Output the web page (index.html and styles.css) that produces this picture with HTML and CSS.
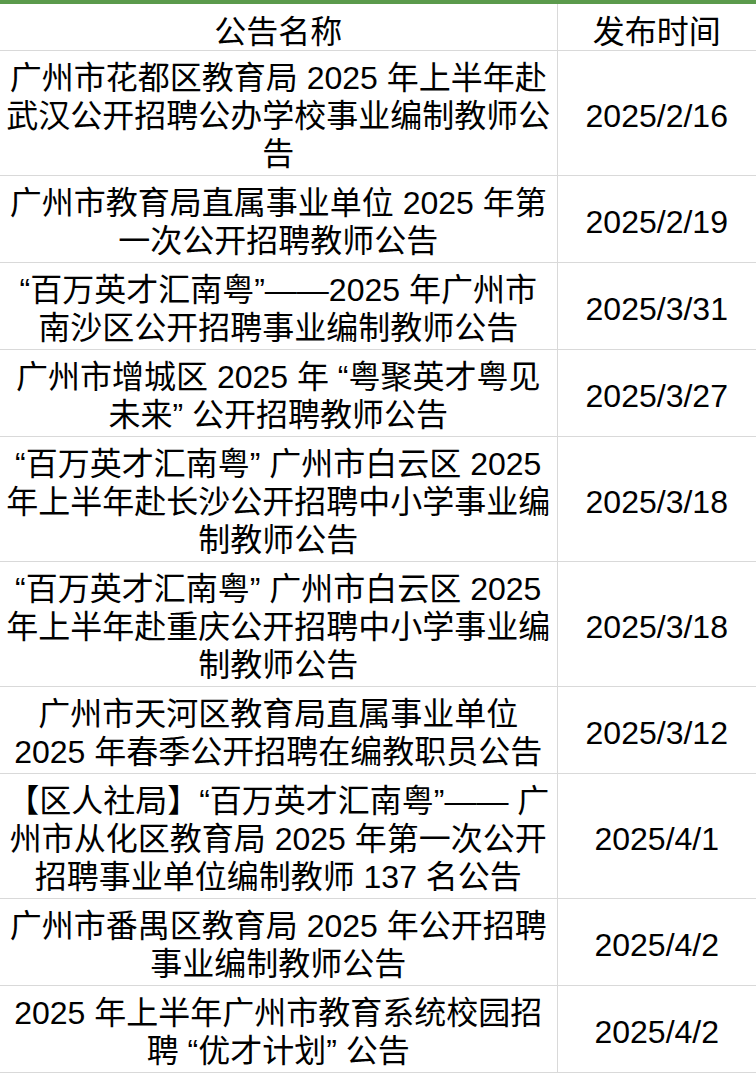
FILE: index.html
```html
<!DOCTYPE html>
<html lang="zh-CN">
<head>
<meta charset="utf-8">
<title>公告列表</title>
<link rel="stylesheet" href="styles.css">
</head>
<body>
<div class="sheet">
<table class="notice-table">
  <colgroup><col class="col-name"><col class="col-date"></colgroup>
  <thead>
    <tr><th class="head">公告名称</th><th class="head">发布时间</th></tr>
  </thead>
  <tbody>
    <tr><td class="name">广州市花都区教育局 2025 年上半年赴<br>武汉公开招聘公办学校事业编制教师公<br>告</td><td class="date">2025/2/16</td></tr>
    <tr><td class="name">广州市教育局直属事业单位 2025 年第<br>一次公开招聘教师公告</td><td class="date">2025/2/19</td></tr>
    <tr><td class="name">“百万英才汇南粤”——2025 年广州市<br>南沙区公开招聘事业编制教师公告</td><td class="date">2025/3/31</td></tr>
    <tr><td class="name">广州市增城区 2025 年 “粤聚英才粤见<br>未来” 公开招聘教师公告</td><td class="date">2025/3/27</td></tr>
    <tr><td class="name">“百万英才汇南粤” 广州市白云区 2025<br>年上半年赴长沙公开招聘中小学事业编<br>制教师公告</td><td class="date">2025/3/18</td></tr>
    <tr><td class="name">“百万英才汇南粤” 广州市白云区 2025<br>年上半年赴重庆公开招聘中小学事业编<br>制教师公告</td><td class="date">2025/3/18</td></tr>
    <tr><td class="name">广州市天河区教育局直属事业单位<br>2025 年春季公开招聘在编教职员公告</td><td class="date">2025/3/12</td></tr>
    <tr><td class="name">【区人社局】“百万英才汇南粤”—— 广<br>州市从化区教育局 2025 年第一次公开<br>招聘事业单位编制教师 137 名公告</td><td class="date">2025/4/1</td></tr>
    <tr><td class="name">广州市番禺区教育局 2025 年公开招聘<br>事业编制教师公告</td><td class="date">2025/4/2</td></tr>
    <tr><td class="name">2025 年上半年广州市教育系统校园招<br>聘 “优才计划” 公告</td><td class="date">2025/4/2</td></tr>
  </tbody>
</table>
</div>
</body>
</html>
```
FILE: styles.css
```css
html, body {
  margin: 0;
  padding: 0;
  background: #ffffff;
}
body {
  font-family: "Liberation Sans", "Noto Sans CJK SC", sans-serif;
  color: #000000;
  overflow: hidden;
}
.sheet {
  border-top: 4px solid #5b9a4c;
  width: 756px;
}
.notice-table {
  width: 756px;
  border-collapse: collapse;
  table-layout: fixed;
}
.col-name { width: 557px; }
.col-date { width: 199px; }
.notice-table th,
.notice-table td {
  border: 1px solid #d9d9d9;
  text-align: center;
  vertical-align: middle;
  font-size: 32px;
  line-height: 38px;
  white-space: nowrap;
  overflow: hidden;
}
.notice-table tr > :first-child { border-left: none; }
.notice-table tr > :last-child { border-right: none; }
.notice-table thead th { border-top: none; }
.head {
  font-weight: normal;
  font-size: 31px;
  padding: 6px 0 2px;
  height: 38px;
  font-family: "Noto Sans CJK SC", sans-serif;
}
.name {
  padding: 8px 2px 2px;
}
.date {
  padding: 8px 0 2px;
}
```
